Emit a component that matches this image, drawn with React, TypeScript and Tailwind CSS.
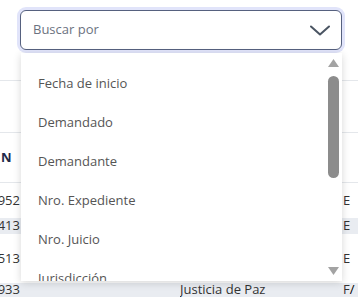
import React from 'react';

const options = [
  'Fecha de inicio',
  'Demandado',
  'Demandante',
  'Nro. Expediente',
  'Nro. Juicio',
  'Jurisdicción',
  'Estado',
];

interface Row {
  nro: string;
  juzgado: string;
  tipo: string;
  height: string;
  striped: boolean;
}

const rows: Row[] = [
  { nro: '952', juzgado: '', tipo: 'E', height: 'h-[35px]', striped: false },
  { nro: '413', juzgado: '', tipo: 'E', height: 'h-[16px]', striped: true },
  { nro: '513', juzgado: '', tipo: 'E', height: 'h-[49px]', striped: false },
  { nro: '933', juzgado: 'Justicia de Paz', tipo: 'F/', height: 'h-[14px]', striped: true },
];

function BackgroundTable() {
  return (
    <div className="flex flex-col h-[297px] overflow-hidden text-[13px] text-[#333]">
      <div className="h-[80px] shrink-0" />
      <div className="h-[52px] shrink-0 border-t border-[#e4e7eb]" />
      <div className="h-[51px] shrink-0 border-y border-[#e4e7eb] flex items-center pl-[1px] font-bold text-[#1e2a4a]">
        N
      </div>
      {rows.map((row, idx) => (
        <div
          key={idx}
          className={`${row.height} shrink-0 grid grid-cols-[20px_160px_163px_15px] items-center whitespace-nowrap ${
            row.striped ? 'bg-[#e9ecf1]' : ''
          }`}
        >
          <div className="flex justify-end overflow-hidden">
            <span>{row.nro}</span>
          </div>
          <div />
          <div className="overflow-hidden">{row.juzgado}</div>
          <div className="overflow-hidden">
            {row.tipo === 'F/' ? (
              <span>
                F<span className="text-black">/</span>
              </span>
            ) : (
              row.tipo
            )}
          </div>
        </div>
      ))}
    </div>
  );
}

function ScrollTrack() {
  return (
    <div className="w-[17px] shrink-0 flex flex-col items-center pt-[6px] pb-[6px]">
      <svg width="11" height="8" viewBox="0 0 11 8">
        <polygon points="5.5,0 11,8 0,8" fill="#a3a3a3" />
      </svg>
      <div className="mt-[9px] w-[11px] h-[102px] rounded-full bg-[#8c8c8c]" />
      <div className="flex-1" />
      <svg width="11" height="8" viewBox="0 0 11 8">
        <polygon points="0,0 11,0 5.5,8" fill="#a3a3a3" />
      </svg>
    </div>
  );
}

function SearchSelect() {
  return (
    <div className="absolute top-[10px] left-[20px] w-[322px]">
      <div className="h-[40px] rounded-[6px] border-[1.5px] border-[#56617f] bg-white shadow-[0_0_0_3px_#e1e4fa] flex items-center pl-[12px] pr-[11px]">
        <span className="flex-1 text-[13px] text-[#6b7280]">Buscar por</span>
        <svg width="20" height="11" viewBox="0 0 20 11" fill="none">
          <path d="M1 1.5 L10 9.5 L19 1.5" stroke="#4b5563" strokeWidth="2" strokeLinecap="round" strokeLinejoin="round" />
        </svg>
      </div>
      <div className="absolute top-[43px] left-[1px] right-0 h-[228px] bg-white shadow-[0_2px_8px_rgba(0,0,0,0.16)] flex overflow-hidden">
        <ul className="flex-1 pt-[11px]">
          {options.map((opt) => (
            <li key={opt} className="h-[39px] flex items-center pl-[17px] text-[13px] text-[#555]">
              {opt}
            </li>
          ))}
        </ul>
        <ScrollTrack />
      </div>
    </div>
  );
}

export default function App() {
  return (
    <div className="relative w-[358px] h-[306px] overflow-hidden bg-white font-['Open_Sans',sans-serif]">
      <BackgroundTable />
      <SearchSelect />
    </div>
  );
}
